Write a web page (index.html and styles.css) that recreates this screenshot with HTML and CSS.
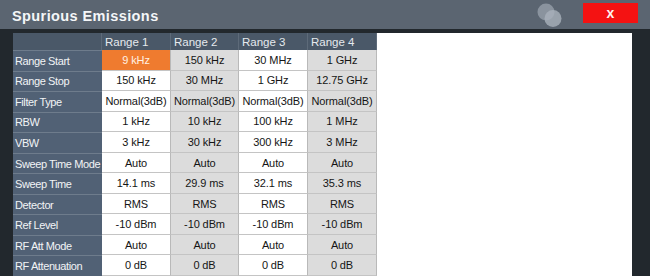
FILE: index.html
```html
<!DOCTYPE html>
<html>
<head>
<meta charset="utf-8">
<link rel="stylesheet" href="styles.css">
</head>
<body>
<div class="window">
  <div class="titlebar">
    <span class="title">Spurious Emissions</span>
    <div class="tools">
      <svg class="circles" width="28" height="26" viewBox="0 0 28 26">
        <circle cx="10" cy="10" r="8.5" fill="#9aa3ae" fill-opacity="0.75"/>
        <circle cx="17" cy="16.5" r="8.5" fill="#a9b1bb" fill-opacity="0.8"/>
      </svg>
      <div class="close">x</div>
    </div>
  </div>
  <div class="body">
    <div class="content">
      <div class="grid">
        <div class="hd lab"></div>
        <div class="hd">Range 1</div>
        <div class="hd">Range 2</div>
        <div class="hd">Range 3</div>
        <div class="hd">Range 4</div>

        <div class="lab">Range Start</div>
        <div class="c w sel">9 kHz</div><div class="c g">150 kHz</div><div class="c w">30 MHz</div><div class="c g">1 GHz</div>

        <div class="lab">Range Stop</div>
        <div class="c w">150 kHz</div><div class="c g">30 MHz</div><div class="c w">1 GHz</div><div class="c g">12.75 GHz</div>

        <div class="lab">Filter Type</div>
        <div class="c w">Normal(3dB)</div><div class="c g">Normal(3dB)</div><div class="c w">Normal(3dB)</div><div class="c g">Normal(3dB)</div>

        <div class="lab">RBW</div>
        <div class="c w">1 kHz</div><div class="c g">10 kHz</div><div class="c w">100 kHz</div><div class="c g">1 MHz</div>

        <div class="lab">VBW</div>
        <div class="c w">3 kHz</div><div class="c g">30 kHz</div><div class="c w">300 kHz</div><div class="c g">3 MHz</div>

        <div class="lab">Sweep Time Mode</div>
        <div class="c w">Auto</div><div class="c g">Auto</div><div class="c w">Auto</div><div class="c g">Auto</div>

        <div class="lab">Sweep Time</div>
        <div class="c w">14.1 ms</div><div class="c g">29.9 ms</div><div class="c w">32.1 ms</div><div class="c g">35.3 ms</div>

        <div class="lab">Detector</div>
        <div class="c w">RMS</div><div class="c g">RMS</div><div class="c w">RMS</div><div class="c g">RMS</div>

        <div class="lab">Ref Level</div>
        <div class="c w">-10 dBm</div><div class="c g">-10 dBm</div><div class="c w">-10 dBm</div><div class="c g">-10 dBm</div>

        <div class="lab">RF Att Mode</div>
        <div class="c w">Auto</div><div class="c g">Auto</div><div class="c w">Auto</div><div class="c g">Auto</div>

        <div class="lab">RF Attenuation</div>
        <div class="c w">0 dB</div><div class="c g">0 dB</div><div class="c w">0 dB</div><div class="c g">0 dB</div>
      </div>
    </div>
  </div>
</div>
</body>
</html>
```
FILE: styles.css
```css
html, body {
  margin: 0;
  padding: 0;
  width: 650px;
  height: 276px;
  overflow: hidden;
  background: #22282d;
  font-family: "Liberation Sans", Arial, sans-serif;
}
.window {
  display: flex;
  flex-direction: column;
  width: 650px;
  height: 276px;
}
.titlebar {
  height: 29px;
  flex: none;
  background: #5b6571;
  display: flex;
  align-items: center;
  justify-content: space-between;
  padding: 0 12px 0 12px;
  box-sizing: border-box;
}
.title {
  color: #f4f6f8;
  font-weight: bold;
  font-size: 14.5px;
  letter-spacing: 0.4px;
  margin-top: 3px;
}
.tools {
  display: flex;
  align-items: center;
  gap: 19px;
}
.circles {
  display: block;
  margin-top: 1px;
}
.close {
  width: 55px;
  height: 20px;
  background: #f41212;
  color: #fff2f2;
  font-weight: bold;
  font-size: 14px;
  display: flex;
  align-items: center;
  justify-content: center;
  margin-top: -3px;
  line-height: 1;
}
.body {
  flex: 1;
  display: flex;
  padding: 4px 18px 0 13px;
  background: #22282d;
}
.content {
  flex: 1;
  background: #ffffff;
}
.grid {
  display: grid;
  grid-template-columns: 89px 69px 68px 69px 69px;
  grid-template-rows: 17px repeat(11, 20.55px);
  width: 364px;
  font-size: 11px;
  letter-spacing: -0.1px;
}
.grid > div {
  box-sizing: border-box;
  display: flex;
  align-items: center;
  white-space: nowrap;
  overflow: hidden;
}
.hd {
  background: #4a5868;
  color: #e6eaee;
  font-size: 11.5px;
  padding-left: 3px;
  border-right: 1px solid #5d6a79;
  letter-spacing: 0;
}
.lab {
  background: #516175;
  color: #f2f4f6;
  padding-left: 2px;
  letter-spacing: -0.4px;
  border-top: 1px solid #6e7c8c;
}
.hd.lab {
  background: #4a5868;
  border-top: none;
}
.c {
  justify-content: center;
  color: #151515;
  border-right: 1px solid #b9b9b9;
  border-bottom: 1px solid #c4c4c4;
}
.c.w { background: #ffffff; }
.c.g { background: #dcdcdc; }
.c.sel {
  background: #ef7b2f;
  color: #fff1e4;
}
```
